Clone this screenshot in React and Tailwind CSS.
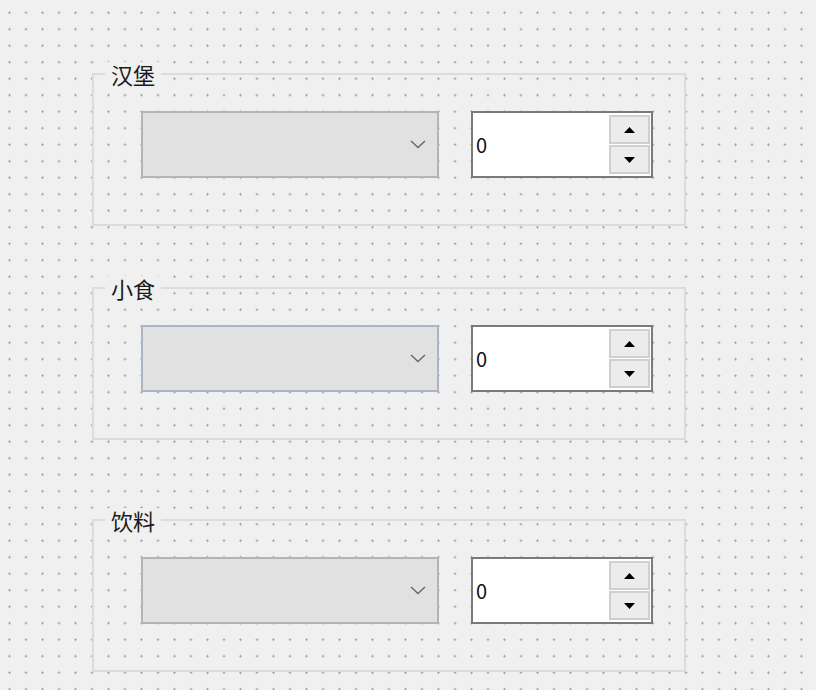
import React from "react";

const FONT = { fontFamily: '"Noto Sans CJK SC", "Microsoft YaHei", sans-serif' };

function Chevron() {
  return (
    <svg width="16" height="9" viewBox="0 0 16 9" className="block">
      <polyline points="1,1 8,7.5 15,1" fill="none" stroke="#666666" strokeWidth="1.4" />
    </svg>
  );
}

function Spinner() {
  return (
    <div className="ml-[32px] flex h-[67px] w-[182px] items-stretch border-2 border-[#7a7a7a] bg-white">
      <div
        className="flex flex-1 items-center pl-[3px] text-[20px] leading-none text-[#111]"
        style={FONT}
      >
        0
      </div>
      <div className="my-[2px] mr-[1px] flex w-[41px] flex-col gap-[1px]">
        <div className="flex flex-1 items-center justify-center border-2 border-[#cfcfcf] bg-[#ececec]">
          <svg width="11" height="6" viewBox="0 0 11 6" className="block">
            <polygon points="5.5,0 11,6 0,6" fill="#000" />
          </svg>
        </div>
        <div className="flex flex-1 items-center justify-center border-2 border-[#cfcfcf] bg-[#ececec]">
          <svg width="11" height="6" viewBox="0 0 11 6" className="block">
            <polygon points="0,0 11,0 5.5,6" fill="#000" />
          </svg>
        </div>
      </div>
    </div>
  );
}

function Group({ title, comboBorder, className }) {
  return (
    <div className={"relative h-[153px] w-[594px] border-2 border-[#dcdcdc] " + className}>
      <span
        className="absolute left-[11px] top-[-13px] bg-[#f0f0f0] px-[6px] text-[22px] leading-[24px] text-[#1a1a1a]"
        style={FONT}
      >
        {title}
      </span>
      <div className="flex items-start pl-[47px] pt-[36px]">
        <div
          className={
            "flex h-[67px] w-[298px] items-center justify-end border-2 bg-[#e1e1e1] pr-[11px] " + comboBorder
          }
        >
          <Chevron />
        </div>
        <Spinner />
      </div>
    </div>
  );
}

export default function App() {
  return (
    <div className="relative h-[690px] w-[816px] overflow-hidden bg-[#f0f0f0] [background-image:radial-gradient(circle,#9c9c9c_0.8px,transparent_1.4px)] [background-size:16.5px_16.5px] [background-position:1.25px_4.45px]">
      <div className="flex flex-col pl-[92px] pt-[73px]">
        <Group title="汉堡" comboBorder="border-[#b4b4b4]" className="" />
        <Group title="小食" comboBorder="border-[#aab6c4]" className="mt-[61px]" />
        <Group title="饮料" comboBorder="border-[#b4b4b4]" className="mt-[79px]" />
      </div>
    </div>
  );
}
